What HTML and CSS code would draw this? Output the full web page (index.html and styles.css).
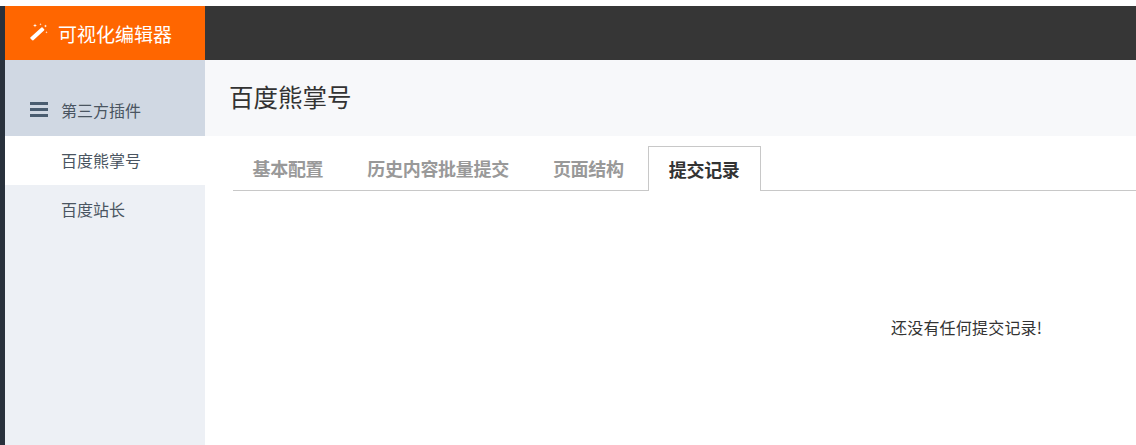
FILE: index.html
```html
<!DOCTYPE html>
<html lang="zh-CN">
<head>
    <meta charset="UTF-8">
    <title>百度熊掌号</title>
    <link rel="stylesheet" href="styles.css">
</head>
<body>
    <div class="app">
        <header class="topbar">
            <a class="brand" href="#">
                <svg class="brand-icon" viewBox="0 0 18 18" width="18" height="18">
                    <path d="M0.600 14.200 11.400 4.600a1 1 0 0 1 1.400.1l1.300 1.500a1 1 0 0 1-.1 1.400L3.400 17.200a1 1 0 0 1-1.400-.1L.500 15.600a1 1 0 0 1 .1-1.400z" fill="#fff"/>
                    <path d="M5 .5l.5 1.500L7 2.500 5.500 3 5 4.500 4.500 3 3 2.500 4.500 2zM10.500 0l.3 1 1 .3-1 .3-.3 1-.3-1-1-.3 1-.3zM15.500 1.500l.4 1.100 1.100.4-1.100.4-.4 1.100-.4-1.100-1.100-.4 1.100-.4zM16.500 8l.3 1 1 .3-1 .3-.3 1-.3-1-1-.3 1-.3z" fill="#fff"/>
                </svg>
                <span>可视化编辑器</span>
            </a>
        </header>
        <div class="layout">
            <aside class="sidebar">
                <div class="menu-title">
                    <span class="bars"><i></i><i></i><i></i></span>
                    <span>第三方插件</span>
                </div>
                <a class="menu-item active" href="#">百度熊掌号</a>
                <a class="menu-item" href="#">百度站长</a>
            </aside>
            <main class="content">
                <div class="page-head">
                    <h1>百度熊掌号</h1>
                </div>
                <ul class="tabs">
                    <li><a href="#">基本配置</a></li>
                    <li><a href="#">历史内容批量提交</a></li>
                    <li><a href="#">页面结构</a></li>
                    <li class="active"><a href="#">提交记录</a></li>
                </ul>
                <div class="empty">还没有任何提交记录!</div>
            </main>
        </div>
    </div>
</body>
</html>
```

FILE: styles.css
```css
html, body {
    height: 100%;
}

body {
    margin: 0;
    overflow: hidden;
    background-color: #fff;
    font-family: "Noto Sans CJK SC", "Liberation Sans", sans-serif;
    color: #333;
}

a {
    text-decoration: none;
}

.app {
    display: flex;
    flex-direction: column;
    height: 439px;
    margin-top: 6px;
    border-left: 5px solid #29313c;
}

.topbar {
    display: flex;
    flex: none;
    height: 54px;
    background-color: #363636;
}

.brand {
    display: flex;
    align-items: center;
    gap: 10px;
    width: 200px;
    padding-left: 25px;
    box-sizing: border-box;
    background-color: #ff6600;
    color: #fff;
    font-size: 19px;
}

.brand-icon {
    margin-top: -2px;
}

.layout {
    display: flex;
    flex: 1;
}

.sidebar {
    flex: none;
    width: 200px;
    background-color: #edf0f5;
    color: #4a5561;
    font-size: 16px;
}

.menu-title {
    display: flex;
    align-items: center;
    gap: 13px;
    height: 76px;
    padding: 23px 0 0 25px;
    box-sizing: border-box;
    background-color: #d0d8e3;
}

.bars {
    display: flex;
    flex-direction: column;
    gap: 3px;
    margin-top: -1px;
}

.bars i {
    display: block;
    width: 18px;
    height: 3px;
    background-color: #4a5d70;
}

.menu-item {
    display: block;
    height: 49px;
    padding-left: 56px;
    line-height: 48px;
    color: #4a5561;
}

.menu-item.active {
    background-color: #fff;
}

.content {
    flex: 1;
    min-width: 0;
}

.page-head {
    display: flex;
    align-items: center;
    height: 76px;
    padding: 0 0 4px 24px;
    box-sizing: border-box;
    background-color: #f7f8fa;
}

.page-head h1 {
    margin: 0;
    font-size: 24.500px;
    font-weight: 400;
    color: #333;
}

.tabs {
    display: flex;
    gap: 4px;
    height: 44px;
    margin: 10px 0 0 27.500px;
    padding: 0;
    list-style: none;
    border-bottom: 1px solid #c8c8c8;
}

.tabs a {
    display: block;
    height: 44px;
    padding: 0 20px;
    line-height: 45px;
    font-size: 18px;
    font-weight: 700;
    color: #999;
    white-space: nowrap;
    letter-spacing: -0.3px;
}

.tabs .active a {
    height: 45px;
    box-sizing: border-box;
    border: 1px solid #c8c8c8;
    border-bottom: 0;
    background-color: #fff;
    color: #333;
}

.empty {
    padding: 124px 0 0 686px;
    font-size: 16px;
    letter-spacing: 0.2px;
    color: #333;
}
```
